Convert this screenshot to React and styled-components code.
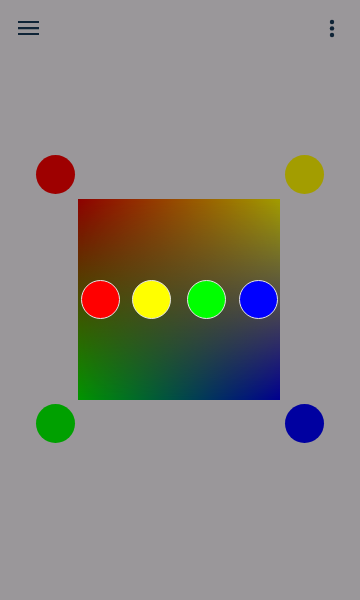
import React from 'react'
import styled, { createGlobalStyle } from 'styled-components'

const GlobalStyle = createGlobalStyle`
	html, body {
		margin: 0;
		padding: 0;
		height: 100%;
		background: #9a979a;
		font-family: Roboto, 'Liberation Sans', sans-serif;
	}
	#root {
		min-height: 100vh;
	}
`

const Page = styled.div`
	min-height: 100vh;
	background: #9a979a;
	display: flex;
	flex-direction: column;
`

const Toolbar = styled.header`
	height: 56px;
	box-sizing: border-box;
	padding: 16px;
	display: flex;
	justify-content: space-between;
	align-items: flex-start;
`

const IconButton = styled.button`
	width: 24px;
	height: 24px;
	padding: 0;
	border: 0;
	background: none;
	color: #0f2437;
	display: block;
	svg {
		display: block;
	}
`

const Stage = styled.main`
	padding-top: 99px;
	display: flex;
	justify-content: center;
`

// corner swatches sit just outside each corner of the gradient square
const Board = styled.div`
	display: grid;
	grid-template-columns: 39px 3px 202px 5px 39px;
	grid-template-rows: 39px 5px 201px 4px 39px;
`

const Corner = styled.div`
	width: 39px;
	height: 39px;
	border-radius: 50%;
	background: ${p => p.color};
	grid-column: ${p => p.col};
	grid-row: ${p => p.row};
`

const Square = styled.div`
	grid-column: 3;
	grid-row: 3;
	position: relative;
	background: linear-gradient(to right, #009600, #000090);
	&::before {
		content: '';
		position: absolute;
		inset: 0;
		background: linear-gradient(to right, #8e0000, #a29c00);
		-webkit-mask-image: linear-gradient(to bottom, #000, transparent);
		mask-image: linear-gradient(to bottom, #000, transparent);
	}
`

const Handle = styled.div`
	position: absolute;
	top: 81px;
	left: ${p => p.x}px;
	width: 39px;
	height: 39px;
	box-sizing: border-box;
	border-radius: 50%;
	border: 1px solid #e4e4e4;
	background: ${p => p.color};
`

const handles = [
	{ color: '#ff0000', x: 3 },
	{ color: '#ffff00', x: 54 },
	{ color: '#00ff00', x: 109 },
	{ color: '#0000ff', x: 161 },
]

const App = () => {
	return (
		<Page>
			<GlobalStyle />
			<Toolbar>
				<IconButton aria-label='menu'>
					<svg width='24' height='24' viewBox='0 0 24 24'>
						<path d='M2 6h21M2 12.2h21M2 18h21' stroke='currentColor' strokeWidth='2.2' />
					</svg>
				</IconButton>
				<IconButton aria-label='more'>
					<svg width='24' height='24' viewBox='0 0 24 24' fill='currentColor'>
						<circle cx='12' cy='6' r='2.2' />
						<circle cx='12' cy='12.4' r='2.2' />
						<circle cx='12' cy='19' r='2.2' />
					</svg>
				</IconButton>
			</Toolbar>

			<Stage>
				<Board>
					<Corner color='#9e0000' col={1} row={1} />
					<Corner color='#a39d00' col={5} row={1} />
					<Square>
						{handles.map(h => (
							<Handle key={h.color} color={h.color} x={h.x} />
						))}
					</Square>
					<Corner color='#00a000' col={1} row={5} />
					<Corner color='#0000a0' col={5} row={5} />
				</Board>
			</Stage>
		</Page>
	)
}

export default App
